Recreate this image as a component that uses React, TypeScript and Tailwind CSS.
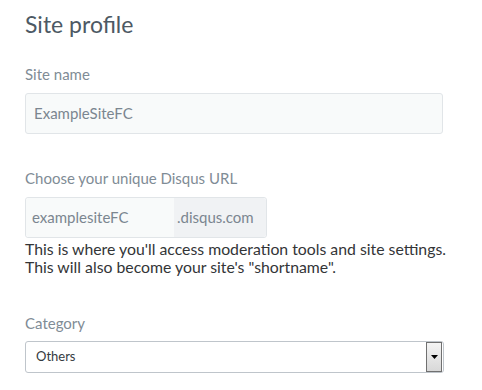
const App = () => {
  return (
    <div className="w-[482px] h-[390px] bg-white pl-[25px] pt-[10px] font-['Lato','Liberation_Sans',sans-serif] overflow-hidden">
      <h1 className="text-[23px] leading-[28px] text-[#4d5964]">Site profile</h1>

      <label className="block mt-[27px] text-[15px] leading-[18px] text-[#7f8c96]">Site name</label>
      <div className="mt-[10px] w-[418px] h-[41px] flex items-center px-[8px] bg-[#f8fafa] border border-[#e1e5e8] rounded-[3px] text-[15px] text-[#7b8690]">
        ExampleSiteFC
      </div>

      <label className="block mt-[35px] text-[15px] leading-[18px] text-[#7f8c96]">
        Choose your unique Disqus URL
      </label>
      <div className="mt-[10px] w-[242px] h-[41px] flex border border-[#e1e5e8] rounded-[3px] text-[15px] text-[#7b8690]">
        <div className="w-[148px] flex items-center px-[6px] bg-[#f8fafa] rounded-l-[3px]">examplesiteFC</div>
        <div className="flex-1 flex items-center px-[3px] bg-[#f0f2f4] rounded-r-[3px]">.disqus.com</div>
      </div>
      <p className="mt-[2px] text-[15.8px] leading-[18px] text-[#333537] whitespace-nowrap">
        This is where you'll access moderation tools and site settings.
        <br />
        This will also become your site's "shortname".
      </p>

      <label className="block mt-[38px] text-[15px] leading-[18px] text-[#7f8c96]">Category</label>
      <div className="mt-[9px] w-[419px] h-[32px] flex items-center border border-[#bfc5cb] rounded-[3px] bg-white">
        <span className="flex-1 pl-[10px] text-[13px] text-[#343a40]">Others</span>
        <div className="w-[16px] h-[30px] mr-px flex items-center justify-center border border-[#707070] bg-gradient-to-b from-[#f4f4f4] to-[#d8d8d8]">
          <svg width="7" height="4" viewBox="0 0 7 4">
            <path d="M0 0h7L3.5 4z" fill="#000" />
          </svg>
        </div>
      </div>
    </div>
  );
};

export default App;
